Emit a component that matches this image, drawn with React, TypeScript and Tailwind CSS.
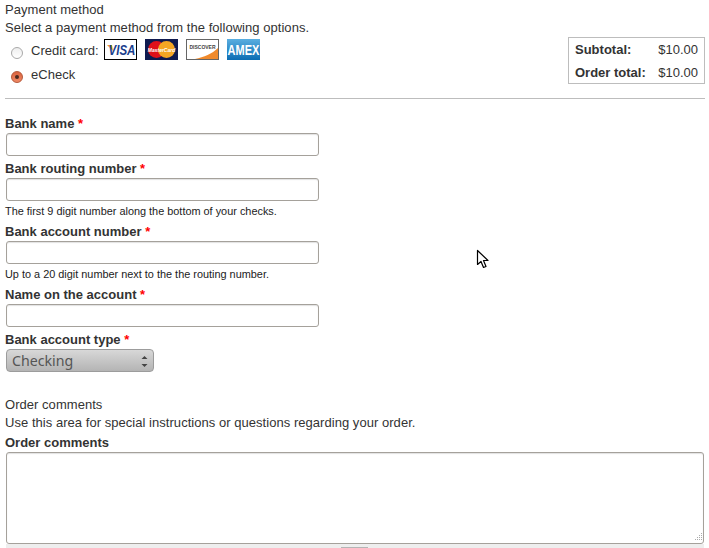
import React from 'react';

function Field({ label, hint }: { label: string; hint?: string }) {
  return (
    <div className="mb-[3px]">
      <label className="block h-[18px] leading-[20px] font-bold text-[13px]">
        {label} <span className="text-[#ff0000]">*</span>
      </label>
      <input
        type="text"
        className="block mt-[1px] ml-px w-[313px] h-[23px] bg-white border border-[#a5a19b] rounded-[3px] shadow-[inset_0_1px_1px_rgba(0,0,0,0.12)]"
      />
      {hint && <div className="mt-[1px] h-[17px] leading-[18px] text-[10.9px] text-[#222]">{hint}</div>}
    </div>
  );
}

function CardLogos() {
  return (
    <div className="flex gap-[8px] ml-[5px]">
      <svg width="33" height="21" viewBox="0 0 33 21">
        <rect x="0.5" y="0.5" width="32" height="20" fill="#fff" stroke="#000" strokeWidth="1" />
        <path d="M3 6 L8 6 L9 12 Z" fill="#f2a51f" />
        <text x="18" y="13" transform="scale(1 1.2)" textAnchor="middle" fontFamily="Liberation Sans" fontSize="11.5" fontWeight="700" fontStyle="italic" fill="#1a3e8c">VISA</text>
      </svg>
      <svg width="33" height="21" viewBox="0 0 33 21">
        <rect width="33" height="21" fill="#0f1a4f" />
        <circle cx="11.5" cy="10.5" r="8.5" fill="#e0101a" />
        <circle cx="21.5" cy="10.5" r="8.5" fill="#f5a623" />
        <text x="16.5" y="12.5" textAnchor="middle" fontFamily="Liberation Sans" fontSize="5" fontWeight="700" fontStyle="italic" fill="#fff">MasterCard</text>
      </svg>
      <svg width="33" height="21" viewBox="0 0 33 21">
        <rect x="0.5" y="0.5" width="32" height="20" fill="#fff" stroke="#666" strokeWidth="1" />
        <path d="M9 20 C18 18 26 15 32 9 L32 20 Z" fill="#f08a2c" />
        <text x="16.5" y="10" textAnchor="middle" fontFamily="Liberation Sans" fontSize="5" fontWeight="700" fill="#444">DISCOVER</text>
      </svg>
      <svg width="33" height="21" viewBox="0 0 33 21">
        <defs>
          <linearGradient id="amexBg" x1="0" y1="0" x2="0" y2="1">
            <stop offset="0" stopColor="#5aaee0" />
            <stop offset="1" stopColor="#0b6db3" />
          </linearGradient>
        </defs>
        <rect width="33" height="21" fill="url(#amexBg)" />
        <text x="16.5" y="12.5" transform="scale(1 1.25)" textAnchor="middle" fontFamily="Liberation Sans" fontSize="11" fontWeight="700" fill="#fff">AMEX</text>
      </svg>
    </div>
  );
}

export default function App() {
  return (
    <div className="relative h-[548px] w-[709px] overflow-hidden bg-white text-[13px] text-[#333] font-['Liberation_Sans',sans-serif]">
      <div className="pl-[5px] pr-[4px]">
        <div className="pt-[1px] h-[19px] leading-[18px] tracking-[0.04px]">Payment method</div>
        <div className="h-[18px] leading-[18px] tracking-[0.04px]">Select a payment method from the following options.</div>

        <div className="flex justify-between items-start h-[62px] border-b border-[#bdbdbd] mb-[15px]">
          <div className="pt-[2px]">
            <div className="flex items-center h-[21px]">
              <span className="ml-[6px] mr-[8px] mt-[7px] w-[12px] h-[12px] rounded-full border border-[#a9a9a9] bg-gradient-to-b from-[#eeeeee] to-white" />
              <span className="mt-[2px] tracking-[0.04px]">Credit card:</span>
              <CardLogos />
            </div>
            <div className="flex items-center h-[20px] mt-[5px]">
              <span className="ml-[6px] mr-[8px] mt-[4px] w-[12px] h-[12px] rounded-full border border-[#b5583a] bg-gradient-to-b from-[#d9623e] to-[#f08a66] flex items-center justify-center">
                <span className="w-[4px] h-[4px] rounded-full bg-[#4a2a20]" />
              </span>
              <span className="tracking-[0.04px]">eCheck</span>
            </div>
          </div>
          <div className="w-[137px] h-[47px] border border-[#bdbdbd] pl-[6px] pr-[6px]">
            <div className="flex justify-between h-[23px] leading-[23px]">
              <span className="font-bold">Subtotal:</span>
              <span>$10.00</span>
            </div>
            <div className="flex justify-between h-[22px] leading-[23px]">
              <span className="font-bold">Order total:</span>
              <span>$10.00</span>
            </div>
          </div>
        </div>

        <Field label="Bank name" />
        <Field label="Bank routing number" hint="The first 9 digit number along the bottom of your checks." />
        <Field label="Bank account number" hint="Up to a 20 digit number next to the the routing number." />
        <Field label="Name on the account" />

        <label className="block h-[18px] leading-[20px] font-bold">
          Bank account type <span className="text-[#ff0000]">*</span>
        </label>
        <div className="relative ml-px mt-[1px] w-[148px] h-[23px] rounded-[4px] border border-[#9c9c9c] bg-gradient-to-b from-[#d8d8d8] to-[#b4b4b4]">
          <div className="pl-[5px] leading-[21px] text-[14.2px] text-[#555] font-['Noto_Sans',sans-serif]">Checking</div>
          <svg className="absolute right-[5px] top-[5px]" width="7" height="13" viewBox="0 0 7 13">
            <path d="M3.5 1 L6.5 4 L0.5 4 Z M0.5 9 L6.5 9 L3.5 12 Z" fill="#444" />
          </svg>
        </div>

        <div className="mt-[23px] h-[18px] leading-[20px] tracking-[0.04px]">Order comments</div>
        <div className="h-[18px] leading-[20px] tracking-[0.04px]">Use this area for special instructions or questions regarding your order.</div>
        <label className="block h-[19px] leading-[24px] font-bold">Order comments</label>
        <div className="relative ml-px mt-[2px] w-[698px] h-[92px]">
          <textarea className="block w-full h-full resize-none bg-white border border-[#a5a19b] rounded-[3px] shadow-[inset_0_1px_1px_rgba(0,0,0,0.12)]" />
          <svg className="absolute right-[1px] bottom-[1px]" width="11" height="11" viewBox="0 0 11 11" fill="#aaa">
            <rect x="9" y="1" width="1" height="1" />
            <rect x="7" y="3" width="1" height="1" />
            <rect x="9" y="3" width="1" height="1" />
            <rect x="5" y="5" width="1" height="1" />
            <rect x="7" y="5" width="1" height="1" />
            <rect x="9" y="5" width="1" height="1" />
            <rect x="3" y="7" width="1" height="1" />
            <rect x="5" y="7" width="1" height="1" />
            <rect x="7" y="7" width="1" height="1" />
            <rect x="9" y="7" width="1" height="1" />
          </svg>
        </div>
        <div className="ml-px w-[698px] h-[4px] bg-[#eeeeee] pl-[335px] flex items-end">
          <span className="block w-[27px] h-px bg-[#b5b5b5]" />
        </div>
      </div>

      {/* mouse pointer */}
      <svg className="absolute left-[476px] top-[249px]" width="14" height="21" viewBox="0 0 14 21">
        <path d="M1.5 1.5 L1.5 15.5 L5 12.5 L7.5 18.5 L10 17.5 L7.5 11.5 L12 11.5 Z" fill="#fff" stroke="#000" strokeWidth="1.2" strokeLinejoin="round" />
      </svg>
    </div>
  );
}
